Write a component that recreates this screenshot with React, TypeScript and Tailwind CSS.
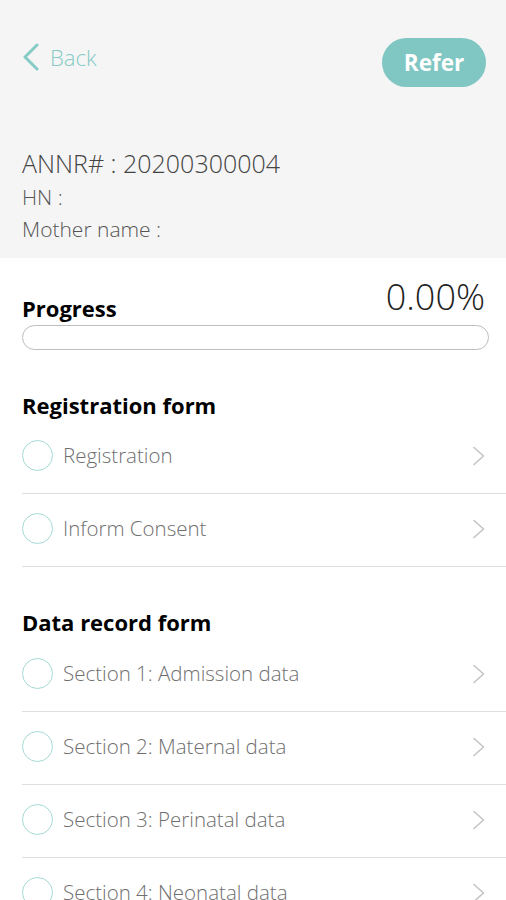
import React from 'react';

const Circle = () => (
  <span className="w-[31px] h-[31px] rounded-full border-[1.5px] border-[#a6dad5] shrink-0" />
);

const Chevron = () => (
  <svg width="14" height="20" viewBox="0 0 14 20" fill="none" className="shrink-0">
    <path d="M2 1.5 L11.5 10 L2 18.5" stroke="#c4c4c4" strokeWidth="1.6" strokeLinecap="round" strokeLinejoin="round" />
  </svg>
);

const Row = ({ label }: { label: string }) => (
  <div className="ml-[22px] h-[73px] pb-[3px] border-b border-[#dedede] flex items-center pr-[20px]">
    <Circle />
    <span className="ml-[10px] text-[20.5px] font-light text-[#6f6f6f] flex-1">{label}</span>
    <Chevron />
  </div>
);

const Heading = ({ children }: { children: React.ReactNode }) => (
  <h2 className="px-[22px] text-[22px] font-bold text-black leading-none">{children}</h2>
);

export default function App() {
  return (
    <div className="w-[506px] h-[900px] overflow-hidden bg-white" style={{ fontFamily: '"Open Sans", "Noto Sans", sans-serif' }}>
      {/* header */}
      <div className="bg-[#f5f5f5] h-[258px] pt-[38px]">
        <div className="flex justify-between items-start pl-[22px] pr-[20px]">
          <button className="flex items-center gap-[10px] mt-[5px] text-[#86cbc6]">
            <svg width="18" height="28" viewBox="0 0 18 28" fill="none">
              <path d="M15 2 L3 14 L15 26" stroke="#86cbc6" strokeWidth="3" strokeLinecap="round" strokeLinejoin="round" />
            </svg>
            <span className="text-[22px] font-light leading-none">Back</span>
          </button>
          <button className="w-[104px] h-[49px] rounded-full bg-[#80c6c3] text-white text-[22.5px] font-bold">
            Refer
          </button>
        </div>
        <div className="px-[22px] mt-[59px] text-[#444] font-light">
          <div className="text-[25px] leading-[34px]">ANNR# : 20200300004</div>
          <div className="text-[21px] leading-[34px] text-[#555]">HN :</div>
          <div className="text-[21px] leading-[30px] text-[#555]">Mother name :</div>
        </div>
      </div>

      {/* progress */}
      <div className="pl-[22px] pt-[21px] pr-[17px]">
        <div className="flex items-start justify-between pr-[4px]">
          <span className="text-[22px] font-bold text-black leading-none mt-[18px] mb-[2px]">Progress</span>
          <span className="text-[36px] font-light text-[#222] leading-none">0.00%</span>
        </div>
        <div className="mt-[4px] h-[25px] rounded-full border-[1.5px] border-[#bdbdbd]" />
      </div>

      <div className="mt-[44px]">
        <Heading>Registration form</Heading>
        <div className="mt-[5px]">
          <Row label="Registration" />
          <Row label="Inform Consent" />
        </div>
      </div>

      <div className="mt-[44px]">
        <Heading>Data record form</Heading>
        <div className="mt-[6px]">
          <Row label="Section 1: Admission data" />
          <Row label="Section 2: Maternal data" />
          <Row label="Section 3: Perinatal data" />
          <Row label="Section 4: Neonatal data" />
        </div>
      </div>
    </div>
  );
}
